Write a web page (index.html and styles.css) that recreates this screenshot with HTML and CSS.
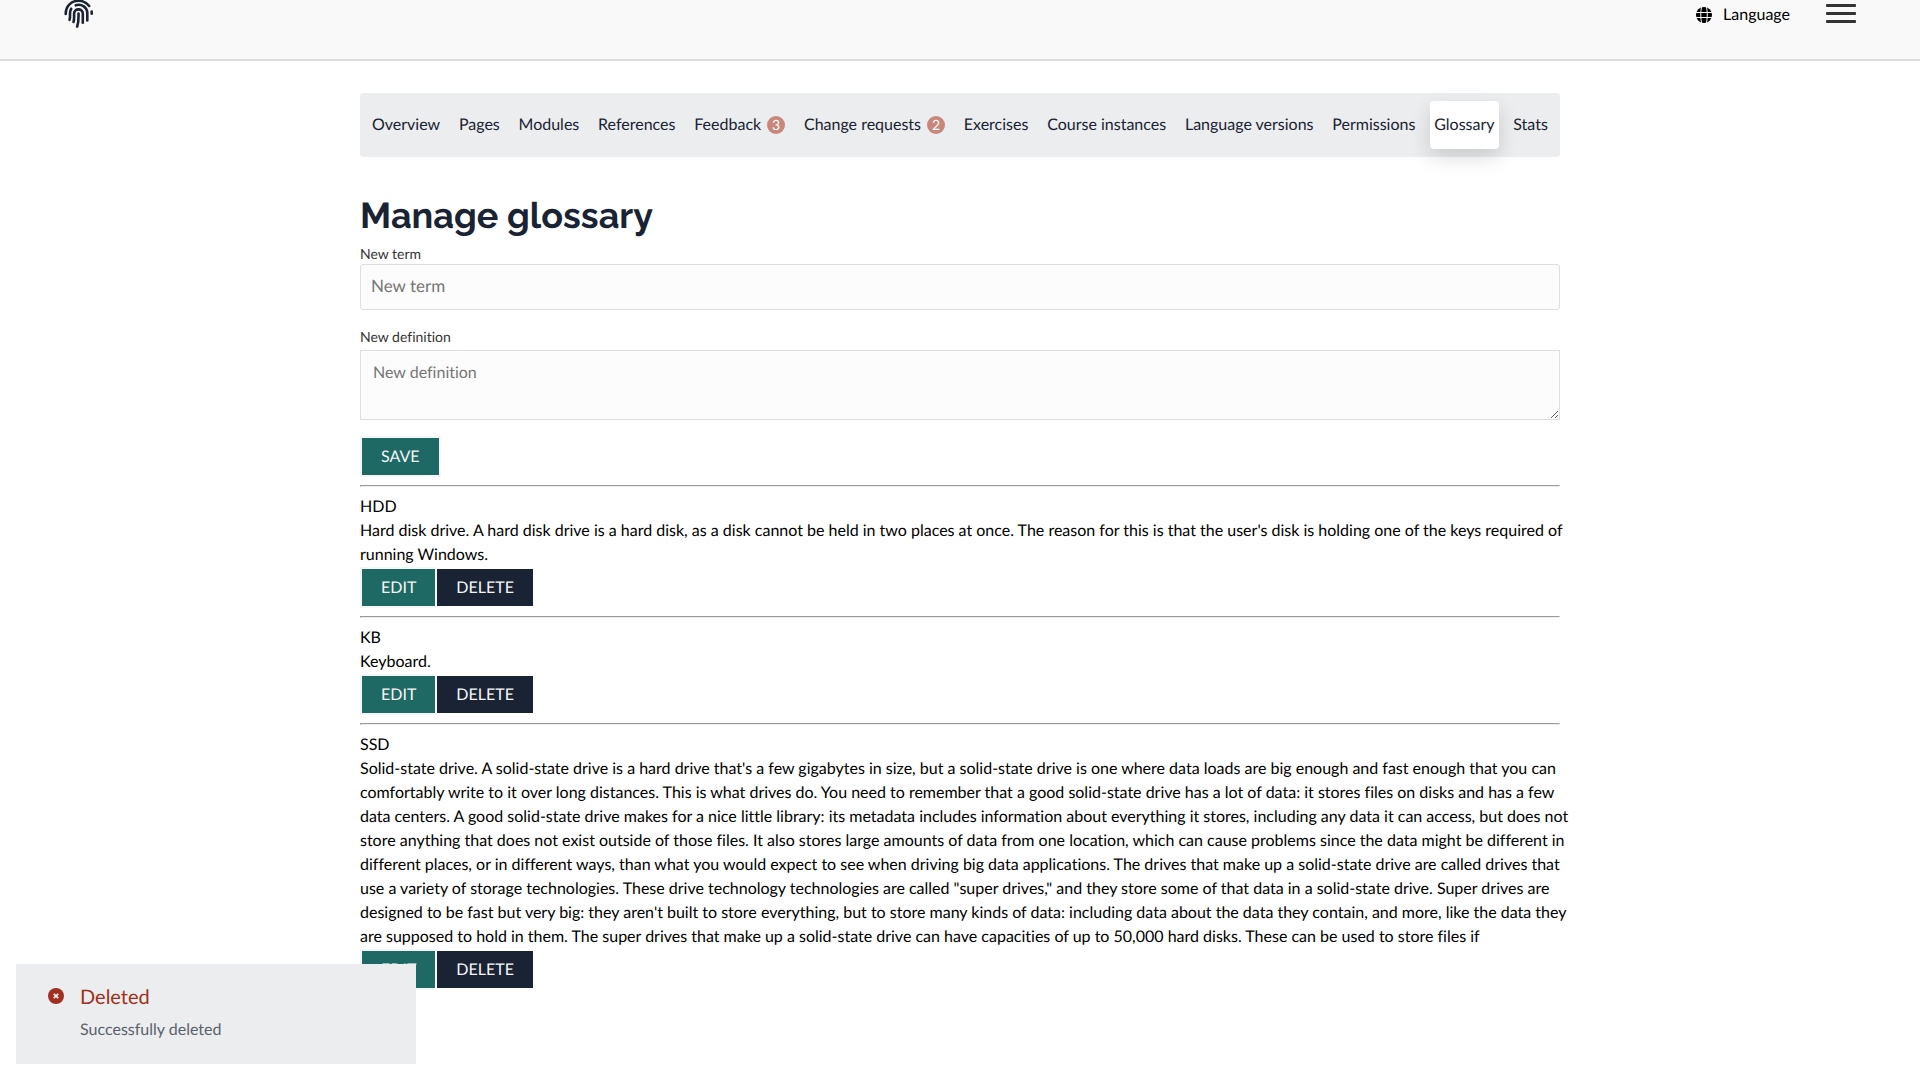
FILE: index.html
```html
<!DOCTYPE html>
<html lang="en">
<head>
<meta charset="utf-8">
<title>Manage glossary</title>
<link rel="stylesheet" href="styles.css">
</head>
<body>
<header class="header">
  <a class="logo" href="#" aria-label="Home">
    <svg width="30" height="30" viewBox="0 0 30 30" fill="none" stroke="#1a2333" stroke-width="2.6" stroke-linecap="round">
      <path d="M1.700 14C1.700 6 7.500.800 14.500.800c4.500 0 8.200 1.900 10.700 5.200"/>
      <path d="M27.700 11.500v2.300"/>
      <path d="M5.500 19.800c.8-2 .5-4 .5-6.300 0-2 .3-3.500 1.200-4.800"/>
      <path d="M11.800 5.300c5.800-1.800 11.500 2 11.500 7.900v7.300"/>
      <path d="M9.500 22c.9-2.500.6-5 .6-8.300 0-5.800 8.700-5.800 8.700 0V22.800"/>
      <path d="M14.500 13.500c.2 5 0 9-1.300 13"/>
    </svg>
  </a>
  <div class="header-tools">
    <button class="language" type="button">
      <svg width="16" height="16" viewBox="0 0 16 16">
        <circle cx="8" cy="8" r="8" fill="#000"/>
        <path d="M0 5.500h16M0 10.500h16M5.500 0C4.500 5 4.500 11 5.500 16M10.500 0c1 5 1 11 0 16" fill="none" stroke="#f9f9f9"/>
      </svg>
      Language
    </button>
    <button class="menu" type="button" aria-label="Open menu"><span></span><span></span><span></span></button>
  </div>
</header>
<main class="content">
  <nav class="tabs">
    <a href="#">Overview</a>
    <a href="#">Pages</a>
    <a href="#">Modules</a>
    <a href="#">References</a>
    <a href="#">Feedback <span class="badge">3</span></a>
    <a href="#">Change requests <span class="badge">2</span></a>
    <a href="#">Exercises</a>
    <a href="#">Course instances</a>
    <a href="#">Language versions</a>
    <a href="#">Permissions</a>
    <a href="#" class="active" aria-current="page">Glossary</a>
    <a href="#">Stats</a>
  </nav>
  <h1>Manage glossary</h1>
  <form class="new-term">
    <label for="term">New term</label>
    <input id="term" type="text" placeholder="New term">
    <label for="definition">New definition</label>
    <textarea id="definition" placeholder="New definition"></textarea>
    <div class="actions"><button class="button primary" type="button">Save</button></div>
  </form>
  <hr>
  <section>
    <div>HDD</div>
    <div class="definition">Hard disk drive. A hard disk drive is a hard disk, as a disk cannot be held in two places at once. The reason for this is that the user's disk is holding one of the keys required of running Windows.</div>
    <div class="actions"><button class="button primary" type="button">Edit</button><button class="button secondary" type="button">Delete</button></div>
  </section>
  <hr>
  <section>
    <div>KB</div>
    <div class="definition">Keyboard.</div>
    <div class="actions"><button class="button primary" type="button">Edit</button><button class="button secondary" type="button">Delete</button></div>
  </section>
  <hr>
  <section>
    <div>SSD</div>
    <div class="definition">Solid-state drive. A solid-state drive is a hard drive that's a few gigabytes in size, but a solid-state drive is one where data loads are big enough and fast enough that you can comfortably write to it over long distances. This is what drives do. You need to remember that a good solid-state drive has a lot of data: it stores files on disks and has a few data centers. A good solid-state drive makes for a nice little library: its metadata includes information about everything it stores, including any data it can access, but does not store anything that does not exist outside of those files. It also stores large amounts of data from one location, which can cause problems since the data might be different in different places, or in different ways, than what you would expect to see when driving big data applications. The drives that make up a solid-state drive are called drives that use a variety of storage technologies. These drive technology technologies are called "super drives," and they store some of that data in a solid-state drive. Super drives are designed to be fast but very big: they aren't built to store everything, but to store many kinds of data: including data about the data they contain, and more, like the data they are supposed to hold in them. The super drives that make up a solid-state drive can have capacities of up to 50,000 hard disks. These can be used to store files if</div>
    <div class="actions"><button class="button primary" type="button">Edit</button><button class="button secondary" type="button">Delete</button></div>
  </section>
</main>
<div class="toast" role="status">
  <svg width="16" height="16" viewBox="0 0 16 16">
    <circle cx="8" cy="8" r="8" fill="#a03020"/>
    <path d="M5.800 5.800l4.400 4.400M10.200 5.800l-4.400 4.400" stroke="#ebedee" stroke-width="1.800"/>
  </svg>
  <div>
    <div class="toast-title">Deleted</div>
    <div class="toast-text">Successfully deleted</div>
  </div>
</div>
</body>
</html>
```
FILE: styles.css
```css
* { box-sizing: border-box; }
body {
  margin: 0;
  background: #fff;
  color: #000;
  font: 16px/24px Lato, sans-serif;
  font-variant-ligatures: none;
  text-rendering: geometricPrecision;
}
button, input, textarea { text-rendering: inherit; font-variant-ligatures: none; }
button { font: inherit; cursor: pointer; }
.header {
  display: flex;
  justify-content: space-between;
  align-items: flex-start;
  height: 61px;
  padding: 0 64px;
  background: #f9f9f9;
  border-bottom: 2px solid #dcdcdc;
}
.logo { display: block; height: 28px; overflow: hidden; }
.logo svg { display: block; }
.header-tools { display: flex; gap: 36px; }
.language {
  display: flex;
  align-items: center;
  gap: 11px;
  height: 29px;
  padding: 0;
  border: 0;
  background: none;
  color: #000;
}
.menu {
  display: flex;
  flex-direction: column;
  gap: 5px;
  width: 30px;
  padding: 4px 0;
  border: 0;
  background: none;
}
.menu span { width: 30px; height: 3px; border-radius: 1px; background: #333; }
.content {
  max-width: 1200px;
  margin: 32px auto 0;
}
.tabs {
  display: flex;
  justify-content: space-between;
  padding: 8px;
  border-radius: 3px;
  background: #ebedee;
}
.tabs a {
  display: flex;
  align-items: center;
  gap: 6px;
  height: 48px;
  padding: 0 4px;
  border-radius: 4px;
  color: #1a2333;
  text-decoration: none;
}
.tabs .active {
  background: #fff;
  box-shadow: 0 8px 20px rgba(0, 0, 0, 0.15);
}
.badge {
  width: 18px;
  height: 18px;
  border-radius: 50%;
  background: #c8877a;
  color: #fff;
  font-size: 14px;
  line-height: 18px;
  text-align: center;
}
h1 {
  margin: 32px 0 0;
  color: #1a2333;
  font: 700 36px/54px Raleway, "Open Sans", sans-serif;
}
.new-term { display: flex; flex-direction: column; }
.new-term label { color: #333; font-size: 14px; line-height: 21px; }
.new-term input {
  height: 46px;
  margin-bottom: 16px;
  padding: 0 10px 3px;
  border: 1px solid #dedede;
  border-radius: 3px;
  background: #fcfcfc;
  font: 17px/24px Lato, sans-serif;
}
.new-term textarea {
  height: 70px;
  margin: 3px 0 16px;
  padding: 10px 12px;
  border: 1px solid #dedede;
  background: #fcfcfc;
  font: inherit;
}
::placeholder { color: #757575; }
.definition { margin-right: -18px; }
.actions { display: flex; }
.button {
  height: 41px;
  padding: 0 19px;
  border: 2px solid #f5f6f7;
  color: #f5f6f7;
  text-transform: uppercase;
}
.primary { background: #1f6964; }
.secondary {
  margin-left: -2px;
  border-color: transparent;
  background: #1a2333;
  background-clip: padding-box;
}
hr { margin: 8px 0; }
.toast {
  position: fixed;
  left: 16px;
  bottom: 16px;
  display: flex;
  gap: 16px;
  width: 400px;
  height: 100px;
  padding: 21px 32px;
  background: #ebedee;
}
.toast svg { margin-top: 3px; }
.toast-title { margin-bottom: 9px; color: #a03020; font-size: 20px; }
.toast-text { color: #5b616d; }
```
